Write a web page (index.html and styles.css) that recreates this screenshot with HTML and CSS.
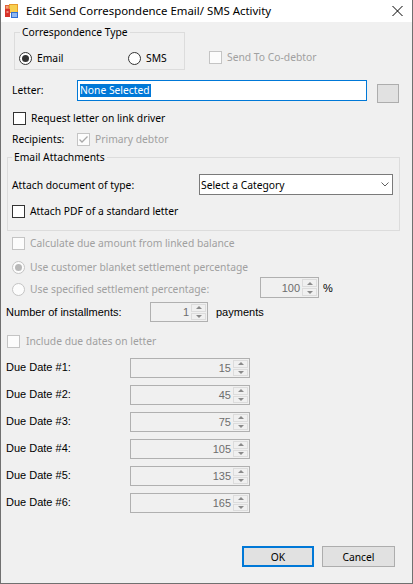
FILE: index.html
```html
<!DOCTYPE html>
<html>
<head>
<meta charset="utf-8">
<title>Edit Send Correspondence Email/ SMS Activity</title>
<link rel="stylesheet" href="styles.css">
</head>
<body>
<div class="window">
  <div class="titlebar">
    <svg class="app-icon" width="13" height="14" viewBox="0 0 13 14">
      <rect x="0.5" y="1.5" width="3.5" height="3.5" fill="#f3a27a" stroke="#e0603a" stroke-width="1"/>
      <rect x="4.5" y="0.5" width="8" height="8" fill="#f7cf4f" stroke="#e79b2a" stroke-width="1"/>
      <rect x="0" y="5" width="5" height="8" fill="#d8332a"/>
      <rect x="1.5" y="7" width="2" height="2" fill="#f08a80"/>
      <rect x="6.5" y="8.5" width="6" height="5" fill="#8fb7f0" stroke="#2f6fd3" stroke-width="1"/>
    </svg>
    <span class="title">Edit Send Correspondence Email/ SMS Activity</span>
    <svg class="close" width="11" height="10" viewBox="0 0 11 10">
      <line x1="0.5" y1="0" x2="10.5" y2="10" stroke="#000" stroke-width="1"/>
      <line x1="10.5" y1="0" x2="0.5" y2="10" stroke="#000" stroke-width="1"/>
    </svg>
  </div>

  <div class="content">
    <div class="row-type">
      <div class="group group-type">
        <div class="legend">Correspondence Type</div>
        <div class="radios">
          <div class="opt opt-email"><span class="radio checked"></span><span>Email</span></div>
          <div class="opt"><span class="radio"></span><span>SMS</span></div>
        </div>
      </div>
      <div class="opt disabled codebtor"><span class="check dis"></span><span>Send To Co-debtor</span></div>
    </div>

    <div class="row-letter">
      <span class="letter-label">Letter:</span>
      <div class="textbox"><span class="sel">None Selected</span></div>
      <div class="dots-btn"></div>
    </div>

    <div class="opt row-request"><span class="check"></span><span>Request letter on link driver</span></div>

    <div class="row-recip">
      <span class="recip-label">Recipients:</span>
      <div class="opt disabled"><span class="check dis"><svg width="11" height="11" viewBox="0 0 11 11"><polyline points="1.5,5.5 4,8 9.5,2.5" fill="none" stroke="#a8a8a8" stroke-width="1.3"/></svg></span><span>Primary debtor</span></div>
    </div>

    <div class="group group-email">
      <div class="legend legend-email">Email Attachments</div>
      <div class="row-doc">
        <span class="doc-label">Attach document of type:</span>
        <div class="combo"><span>Select a Category</span>
          <svg class="chev" width="8" height="5" viewBox="0 0 8 5"><polyline points="0.5,0.5 4,4 7.5,0.5" fill="none" stroke="#606060" stroke-width="1"/></svg>
        </div>
      </div>
      <div class="opt row-pdf"><span class="check"></span><span>Attach PDF of a standard letter</span></div>
    </div>

    <div class="opt disabled row-calc"><span class="check dis"></span><span>Calculate due amount from linked balance</span></div>
    <div class="opt disabled row-blanket"><span class="radio dis checked"></span><span>Use customer blanket settlement percentage</span></div>

    <div class="row-spec">
      <div class="opt disabled spec-label"><span class="radio dis"></span><span>Use specified settlement percentage:</span></div>
      <div class="num num-pct"><span class="num-val">100</span><span class="spin"><span class="sp up"></span><span class="sp down"></span></span></div>
      <span class="ms pct">%</span>
    </div>

    <div class="row-inst">
      <span class="ms inst-label">Number of installments:</span>
      <div class="num num-inst"><span class="num-val">1</span><span class="spin"><span class="sp up"></span><span class="sp down"></span></span></div>
      <span class="ms payments">payments</span>
    </div>

    <div class="opt disabled row-include"><span class="check dis"></span><span>Include due dates on letter</span></div>

    <div class="due-list">
      <div class="due-row"><span class="ms due-label">Due Date #1:</span><div class="num num-due"><span class="num-val">15</span><span class="spin"><span class="sp up"></span><span class="sp down"></span></span></div></div>
      <div class="due-row"><span class="ms due-label">Due Date #2:</span><div class="num num-due"><span class="num-val">45</span><span class="spin"><span class="sp up"></span><span class="sp down"></span></span></div></div>
      <div class="due-row"><span class="ms due-label">Due Date #3:</span><div class="num num-due"><span class="num-val">75</span><span class="spin"><span class="sp up"></span><span class="sp down"></span></span></div></div>
      <div class="due-row"><span class="ms due-label">Due Date #4:</span><div class="num num-due"><span class="num-val">105</span><span class="spin"><span class="sp up"></span><span class="sp down"></span></span></div></div>
      <div class="due-row"><span class="ms due-label">Due Date #5:</span><div class="num num-due"><span class="num-val">135</span><span class="spin"><span class="sp up"></span><span class="sp down"></span></span></div></div>
      <div class="due-row"><span class="ms due-label">Due Date #6:</span><div class="num num-due"><span class="num-val">165</span><span class="spin"><span class="sp up"></span><span class="sp down"></span></span></div></div>
    </div>

    <div class="buttons">
      <div class="btn btn-ok">OK</div>
      <div class="btn btn-cancel">Cancel</div>
    </div>
  </div>
</div>
</body>
</html>
```

FILE: styles.css
```css
* { box-sizing: border-box; }
html, body { margin: 0; padding: 0; }
body {
  width: 413px;
  height: 584px;
  overflow: hidden;
  background: #f0f0f0;
  font-family: "Noto Sans", sans-serif;
  font-size: 10.3px;
  line-height: 14px;
  color: #000;
}
.window {
  width: 413px;
  height: 584px;
  border: 1px solid #707070;
  border-top: none;
  background: #f0f0f0;
  display: flex;
  flex-direction: column;
}
.titlebar {
  height: 22px;
  flex: none;
  background: #fff;
  display: flex;
  align-items: center;
  padding-left: 4px;
}
.app-icon { display: block; }
.title {
  margin-left: 8px;
  font-size: 11.4px;
  line-height: 16px;
}
.close { margin-left: auto; margin-right: 9px; display: block; }

.content { display: flex; flex-direction: column; }

/* generic option (checkbox / radio + text) */
.opt { display: flex; align-items: center; gap: 5px; height: 14px; white-space: nowrap; }
.opt.disabled { color: #a0a0a0; }
.check {
  width: 13px; height: 13px; flex: none;
  border: 1px solid #333;
  background: #fff;
  display: flex; align-items: center; justify-content: center;
}
.check.dis { border-color: #c4c4c4; background: #fcfcfc; }
.check svg { display: block; }
.radio {
  width: 13px; height: 13px; flex: none;
  border: 1px solid #333;
  border-radius: 50%;
  background: #fff;
  display: flex; align-items: center; justify-content: center;
}
.radio.checked::after {
  content: ""; width: 7px; height: 7px; border-radius: 50%; background: #333;
}
.radio.dis { border-color: #c4c4c4; background: #fcfcfc; }
.radio.dis.checked::after { background: #b8b8b8; }

/* groups */
.group { border: 1px solid #dcdcdc; }
.legend {
  margin: -8px 0 0 5px;
  padding: 0 2px;
  background: #f0f0f0;
  width: max-content;
  line-height: 14px;
}
.legend-email { margin-left: 4px; }

.row-type { display: flex; margin: 10px 0 0 13px; height: 38px; }
.group-type { width: 171px; height: 38px; }
.radios { display: flex; margin-top: 12px; padding-left: 4px; }
.opt-email { width: 109px; }
.codebtor { margin: 18px 0 0 24px; }

.row-letter { display: flex; align-items: flex-start; margin: 10px 0 0 11px; height: 21px; }
.letter-label { width: 65px; line-height: 21px; }
.textbox {
  width: 290px; height: 21px;
  border: 1px solid #0078d7;
  background: #fff;
  padding: 2px 0 0 2px;
}
.sel { display: inline-block; background: #0078d7; color: #fff; line-height: 13px; height: 13px; padding-right: 1px; }
.dots-btn {
  width: 22px; height: 19px;
  margin: 4px 0 0 10px;
  background: #e1e1e1;
  border: 1px solid #adadad;
}

.row-request { margin: 10px 0 0 12px; }

.row-recip { display: flex; align-items: center; margin: 7px 0 0 11px; height: 14px; }
.recip-label { width: 65px; }

.group-email { margin: 11px 0 0 6px; width: 393px; height: 74px; }
.row-doc { display: flex; align-items: center; margin-top: 10px; padding-left: 4px; height: 21px; }
.doc-label { width: 187px; }
.combo {
  width: 194px; height: 21px;
  border: 1px solid #7a7a7a;
  background: #fff;
  display: flex; align-items: center;
  padding: 0 0 0 1px;
}
.chev { margin-left: auto; margin-right: 3px; display: block; }
.row-pdf { margin-top: 9px; padding-left: 4px; }

.row-calc { margin: 5px 0 0 11px; }
.row-blanket { margin: 10px 0 0 11px; }

.row-spec { display: flex; align-items: center; margin: 3px 0 0 11px; height: 21px; }
.spec-label { width: 248px; margin-top: 3px; }
.ms { font-family: "Liberation Sans", Arial, sans-serif; font-size: 11px; }
.pct { margin-left: 4px; }

.num {
  display: flex;
  border: 1px solid #b0b0b0;
  background: #f0f0f0;
  padding: 1px 1px 1px 0;
}
.num-val {
  flex: 1;
  text-align: right;
  padding-right: 2px;
  font-family: "Liberation Sans", Arial, sans-serif;
  font-size: 11px;
  color: #6d6d6d;
  display: flex; align-items: center; justify-content: flex-end;
}
.spin { width: 15px; display: flex; flex-direction: column; gap: 1px; }
.sp {
  flex: 1;
  border: 1px solid #dcdcdc;
  display: flex; align-items: center; justify-content: center;
}
.sp.up::after {
  content: "";
  border-left: 3px solid transparent;
  border-right: 3px solid transparent;
  border-bottom: 3px solid #8a8a8a;
}
.sp.down::after {
  content: "";
  border-left: 3px solid transparent;
  border-right: 3px solid transparent;
  border-top: 3px solid #8a8a8a;
}
.num-pct { width: 59px; height: 21px; }

.row-inst { display: flex; align-items: center; margin: 4px 0 0 5px; height: 20px; }
.inst-label { width: 144px; }
.num-inst { width: 58px; height: 20px; }
.payments { margin-left: 8px; }

.row-include { margin: 12px 0 0 6px; gap: 6px; }

.due-list { display: flex; flex-direction: column; gap: 7px; margin: 10px 0 0 5px; }
.due-row { display: flex; align-items: center; height: 20px; }
.due-label { width: 124px; margin-top: -2px; }
.num-due { width: 120px; height: 20px; }

.buttons { display: flex; justify-content: flex-end; gap: 8px; margin-top: 33px; padding-right: 17px; }
.btn {
  height: 21px;
  background: #e1e1e1;
  border: 1px solid #adadad;
  display: flex; align-items: center; justify-content: center;
}
.btn-ok { width: 72px; border: 2px solid #0078d7; }
.btn-cancel { width: 73px; }
```
